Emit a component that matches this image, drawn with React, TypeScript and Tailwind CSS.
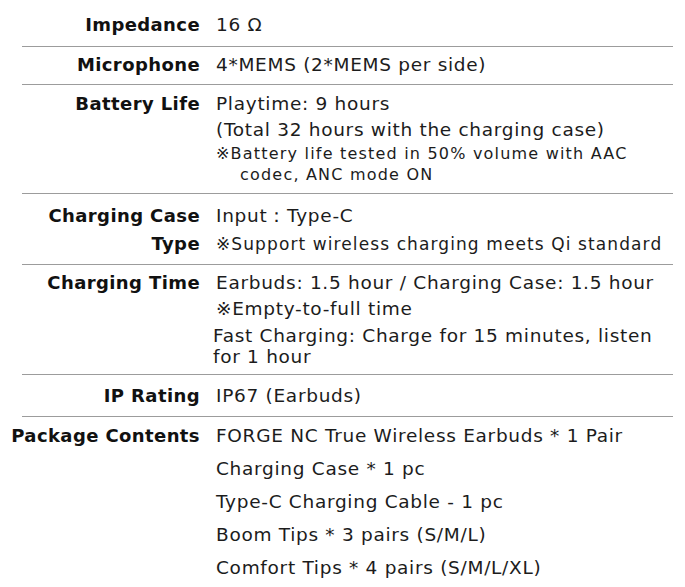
function Row({
  label,
  children,
  className = "",
}: {
  label: React.ReactNode
  children: React.ReactNode
  className?: string
}) {
  return (
    <div className={`flex ${className}`}>
      <div className="w-[200px] shrink-0 text-right font-bold text-[18px] leading-[26px] text-[#111] tracking-[0.4px] whitespace-nowrap">
        {label}
      </div>
      <div className="ml-[16px] flex-1 text-[18.5px] leading-[26px] text-[#1c1c1c] tracking-[0.7px] whitespace-nowrap">
        {children}
      </div>
    </div>
  )
}

function Divider() {
  return <div className="ml-[22px] mr-[12px] h-px bg-[#9c9c9c]" />
}

export default function App() {
  return (
    <main className="w-[685px] min-h-[587px] bg-white overflow-hidden" style={{ fontFamily: '"DejaVu Sans", sans-serif' }}>
      <Row label="Impedance" className="pt-[12px] pb-[8px]">
        16 Ω
      </Row>
      <Divider />
      <Row label="Microphone" className="pt-[5px] pb-[6px]">
        4*MEMS (2*MEMS per side)
      </Row>
      <Divider />
      <Row label="Battery Life" className="pt-[6px] pb-[8px]">
        <div>Playtime: 9 hours</div>
        <div>(Total 32 hours with the charging case)</div>
        <div className="text-[16px] leading-[21px] tracking-[1.2px] pl-[24px] -indent-[24px]">
          ※Battery life tested in 50% volume with AAC
          <br />
          codec, ANC mode ON
        </div>
      </Row>
      <Divider />
      <Row
        label={
          <span className="block leading-[28px]">
            Charging Case
            <br />
            Type
          </span>
        }
        className="pt-[8px] pb-[6px]"
      >
        <div className="leading-[28px]">Input：Type-C</div>
        <div className="leading-[28px] text-[17px] tracking-[1.1px]">※Support wireless charging meets Qi standard</div>
      </Row>
      <Divider />
      <Row label="Charging Time" className="pt-[5px] pb-[7px]">
        <div>Earbuds: 1.5 hour / Charging Case: 1.5 hour</div>
        <div>※Empty-to-full time</div>
        <div className="leading-[21px] mt-[3px] -ml-[3px]">
          Fast Charging: Charge for 15 minutes, listen
          <br />
          for 1 hour
        </div>
      </Row>
      <Divider />
      <Row label="IP Rating" className="pt-[8px] pb-[7px]">
        IP67 (Earbuds)
      </Row>
      <Divider />
      <Row label="Package Contents" className="pt-[6px] pb-[8px]">
        <div className="flex flex-col gap-[7px]">
          <div>FORGE NC True Wireless Earbuds * 1 Pair</div>
          <div>Charging Case * 1 pc</div>
          <div>Type-C Charging Cable - 1 pc</div>
          <div>Boom Tips * 3 pairs (S/M/L)</div>
          <div>Comfort Tips * 4 pairs (S/M/L/XL)</div>
        </div>
      </Row>
    </main>
  )
}
